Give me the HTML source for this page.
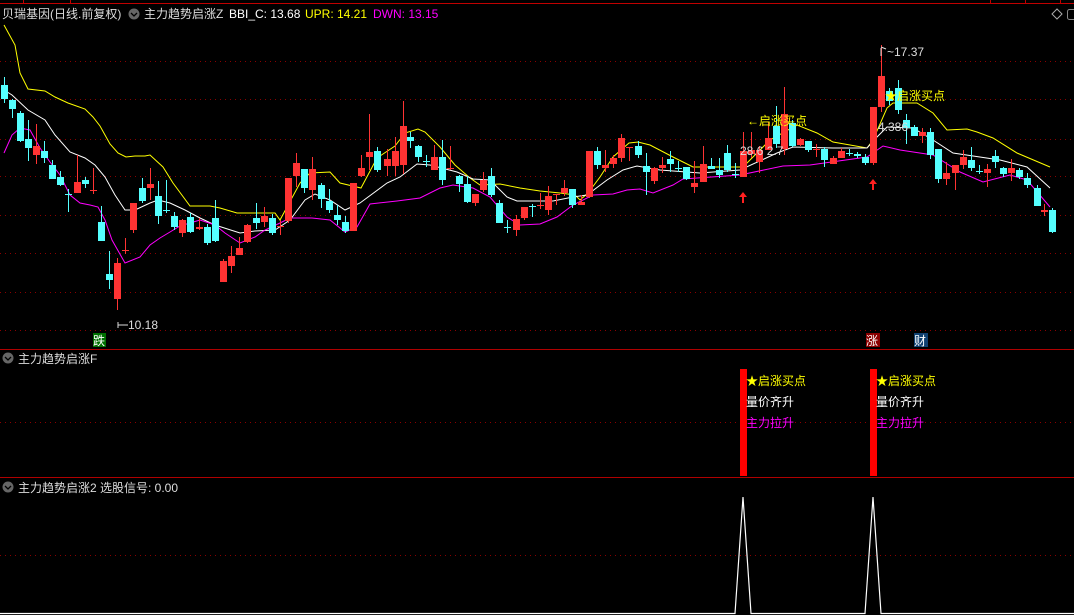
<!DOCTYPE html>
<html><head><meta charset="utf-8"><style>
html,body{margin:0;padding:0;background:#000;width:1074px;height:615px;overflow:hidden}
svg{display:block}
text{font-family:"Liberation Sans","Noto Sans CJK SC",sans-serif;font-size:12px}
</style></head><body>
<svg id="s" width="1074" height="615" viewBox="0 0 1074 615" xmlns="http://www.w3.org/2000/svg">
<rect width="1074" height="615" fill="#000"/>
<line x1="0" y1="3.5" x2="1074" y2="3.5" stroke="#c00000"/>
<line x1="23.5" y1="0" x2="23.5" y2="3" stroke="#c00000"/>
<line x1="70.5" y1="0" x2="70.5" y2="3" stroke="#c00000"/>
<line x1="990.5" y1="0" x2="990.5" y2="3" stroke="#c00000"/>
<line x1="1025.5" y1="0" x2="1025.5" y2="3" stroke="#c00000"/>
<line x1="1060.5" y1="0" x2="1060.5" y2="3" stroke="#c00000"/>
<g id="grid" stroke="#8a0000" stroke-dasharray="1,4"></g>
<line x1="0" y1="349.5" x2="1074" y2="349.5" stroke="#b00000"/>
<line x1="0" y1="477.5" x2="1074" y2="477.5" stroke="#b00000"/>
<text x="2" y="18" fill="#ddd">贝瑞基因(日线.前复权)</text>
<circle cx="134" cy="14" r="5.5" fill="#666"/><path d="M131,13 L134,16 L137,13" stroke="#000" fill="none" stroke-width="1.3"/>
<text x="144" y="18" fill="#ddd">主力趋势启涨Z</text>
<text x="229" y="18" fill="#fff">BBI_C: 13.68</text>
<text x="305" y="18" fill="#ffff00">UPR: 14.21</text>
<text x="373" y="18" fill="#ff00ff">DWN: 13.15</text>
<path d="M1052,14 L1057,9 L1062,14 L1057,19 Z" stroke="#aaa" fill="none"/>
<rect x="1067.5" y="9.5" width="8" height="10" stroke="#888" fill="none" rx="2"/>
<g id="lines" fill="none" stroke-width="1"></g>
<g id="candles"></g>
<text x="747" y="125" fill="#ffff00">←启涨买点</text>
<text x="740" y="155" fill="#ddd" font-size="11">28.6 2.7</text>
<text x="878" y="131" fill="#ddd" font-size="11">4.386</text>
<text x="885" y="100" fill="#ffff00">★启涨买点</text>
<path d="M881,48 L881,56 M881,47 L886,49" stroke="#ddd" fill="none"/>
<text x="887" y="56" fill="#ddd">~17.37</text>
<path d="M118,322 L118,328 M118,325 L128,325" stroke="#ddd" fill="none"/>
<text x="128" y="329" fill="#ddd">10.18</text>
<path d="M743,192 L739,197 L742,197 L742,203 L744,203 L744,197 L747,197 Z" fill="#ff2020"/>
<path d="M873,179 L869,184 L872,184 L872,190 L874,190 L874,184 L877,184 Z" fill="#ff2020"/>
<rect x="93" y="333" width="13" height="14" fill="#007000"/><text x="93" y="345" fill="#fff">跌</text>
<rect x="866" y="333" width="14" height="14" fill="#8b0000"/><text x="866" y="345" fill="#fff">涨</text>
<rect x="914" y="333" width="14" height="14" fill="#104070"/><text x="914" y="345" fill="#fff">财</text>
<circle cx="8" cy="358" r="5.5" fill="#666"/><path d="M5,357 L8,360 L11,357" stroke="#000" fill="none" stroke-width="1.3"/>
<text x="18" y="363" fill="#ddd">主力趋势启涨F</text>
<rect x="740" y="369" width="7" height="107" fill="#ff0000"/>
<rect x="870" y="369" width="7" height="107" fill="#ff0000"/>
<text x="746" y="385" fill="#ffff00">★启涨买点</text>
<text x="746" y="406" fill="#fff">量价齐升</text>
<text x="746" y="427" fill="#ff00ff">主力拉升</text>
<text x="876" y="385" fill="#ffff00">★启涨买点</text>
<text x="876" y="406" fill="#fff">量价齐升</text>
<text x="876" y="427" fill="#ff00ff">主力拉升</text>
<circle cx="8" cy="487" r="5.5" fill="#666"/><path d="M5,486 L8,489 L11,486" stroke="#000" fill="none" stroke-width="1.3"/>
<text x="18" y="492" fill="#ddd">主力趋势启涨2 选股信号: 0.00</text>
<path d="M0,613.5 L735,613.5 L743,497 L751,613.5 L865,613.5 L873,497 L881,613.5 L1074,613.5" stroke="#fff" fill="none" stroke-width="1.2"/>
</svg>
<script>
var NS="http://www.w3.org/2000/svg",s=document.getElementById('s');
function el(p,t,a){var e=document.createElementNS(NS,t);for(var k in a)e.setAttribute(k,a[k]);p.appendChild(e);return e;}
var g=document.getElementById('grid');
[61,99,139,176,215,253,292,330,422,555].forEach(function(y){el(g,'line',{x1:0,y1:y+.5,x2:1074,y2:y+.5});});
var L=document.getElementById('lines');
function pl(pts,c){el(L,'polyline',{points:pts.map(function(p){return p.join(',')}).join(' '),stroke:c});}
pl([[4,25],[15,45],[20,73],[28,89],[45,91],[55,97],[68,103],[85,109],[93,117],[100,126],[110,144],[118,153],[126,157],[135,156],[145,156],[150,155],[163,167],[173,183],[190,206],[210,206],[220,208],[237,213],[275,213],[280,220],[300,183],[310,173],[330,172],[340,183],[361,188],[377,158],[395,146],[405,133],[418,129],[425,132],[440,147],[455,165],[470,178],[480,185],[500,184],[520,188],[540,191],[560,193],[575,195],[580,200],[588,193],[600,177],[613,157],[629,143],[638,142],[650,145],[673,157],[693,167],[743,167],[770,140],[797,125],[817,133],[833,142],[867,148],[873,140],[887,108],[893,103],[917,103],[933,113],[947,130],[967,129],[977,132],[993,138],[1017,153],[1050,167]],'#ffff00');
pl([[4,90],[12,95],[28,110],[45,120],[55,135],[70,152],[85,158],[95,165],[105,177],[115,195],[125,210],[135,210],[150,203],[158,200],[170,203],[185,210],[200,218],[215,225],[240,233],[255,231],[275,230],[290,220],[305,200],[315,194],[330,200],[345,210],[360,203],[387,183],[400,177],[417,164],[430,165],[457,172],[473,179],[490,180],[507,197],[517,201],[553,201],[573,197],[587,195],[607,180],[623,170],[637,166],[660,170],[700,173],[740,170],[777,153],[793,147],[833,148],[867,148],[877,137],[887,127],[913,128],[933,140],[953,153],[1000,160],[1027,167],[1050,188]],'#ffffff');
pl([[4,153],[12,135],[20,128],[30,130],[40,148],[50,162],[60,175],[70,195],[80,203],[90,205],[98,207],[105,220],[112,240],[125,263],[140,257],[150,245],[160,238],[170,232],[180,226],[200,220],[215,225],[225,233],[240,243],[255,237],[265,230],[280,223],[290,218],[312,218],[330,220],[345,232],[357,227],[370,204],[397,201],[420,198],[440,188],[453,185],[473,188],[490,197],[507,217],[520,225],[540,224],[557,217],[573,205],[593,195],[613,194],[627,190],[640,189],[653,193],[673,185],[683,179],[740,175],[783,166],[810,165],[867,157],[883,146],[900,150],[933,155],[960,172],[983,182],[1010,175],[1027,180],[1050,207]],'#ff00ff');
// [x, color(r/c), bodyTop, bodyBottom, wickTop, wickBottom]
var C=[[4,'c',85,99,77,103],[12,'c',100,109,99,118],[20,'c',113,141,111,142],[28,'c',139,148,120,161],[36,'r',146,155,124,164],[44,'c',151,158,141,163],[52,'c',165,179,160,179],[60,'c',177,185,171,186],[68,'c',194,195,189,212],[77,'r',182,193,155,193],[85,'c',180,184,177,188],[93,'r',190,191,168,194],[101,'c',222,241,206,241],[109,'c',274,280,251,289],[117,'r',263,299,258,310],[125,'r',250,251,238,254],[133,'r',203,230,203,233],[142,'c',188,201,178,203],[150,'r',184,188,168,200],[158,'c',196,216,181,224],[166,'c',210,211,180,213],[174,'c',216,227,212,230],[182,'r',220,233,219,237],[190,'c',217,232,213,233],[199,'r',227,229,218,230],[207,'c',227,243,224,245],[215,'c',218,241,200,242],[223,'r',261,282,259,282],[231,'r',256,266,246,273],[239,'r',248,255,237,255],[247,'r',225,242,224,243],[256,'c',218,223,203,229],[264,'r',216,222,207,227],[272,'c',218,233,214,235],[280,'r',226,227,220,235],[288,'r',178,221,178,223],[296,'r',163,176,153,187],[304,'c',169,188,169,193],[312,'r',169,190,157,200],[321,'c',185,199,183,208],[329,'c',201,210,189,213],[337,'c',215,220,205,225],[345,'c',222,231,216,233],[353,'r',183,231,183,231],[361,'r',168,176,155,177],[369,'r',152,157,114,170],[377,'c',151,170,147,172],[387,'r',159,166,149,176],[395,'r',151,166,137,176],[403,'r',126,165,101,174],[410,'c',137,141,132,148],[418,'c',146,157,145,162],[426,'c',161,162,155,167],[434,'r',157,170,145,170],[442,'c',157,180,140,185],[450,'r',168,169,146,170],[459,'c',176,184,175,192],[467,'c',184,202,176,203],[475,'r',194,203,194,206],[483,'r',180,190,172,192],[491,'c',176,195,168,197],[499,'c',203,223,200,223],[507,'c',227,228,220,233],[516,'r',219,230,215,236],[524,'r',207,218,207,220],[532,'c',206,207,204,217],[540,'r',205,206,193,209],[548,'r',196,210,186,215],[556,'r',194,195,194,205],[564,'r',188,193,180,196],[572,'c',189,205,189,208],[581,'r',202,205,195,205],[589,'r',151,197,151,198],[597,'c',151,165,147,169],[605,'r',165,168,150,172],[613,'r',158,164,155,168],[621,'r',138,158,134,162],[629,'r',147,148,147,161],[638,'c',146,155,141,158],[646,'c',166,172,153,195],[654,'r',168,181,167,184],[662,'r',165,168,157,173],[670,'c',159,164,151,172],[678,'c',168,169,161,172],[686,'c',167,179,167,180],[694,'r',183,187,161,193],[703,'r',164,182,146,182],[711,'c',166,169,158,169],[719,'c',170,175,158,178],[727,'c',153,170,145,172],[735,'c',174,175,163,178],[743,'r',151,177,132,177],[751,'r',150,154,132,158],[759,'r',150,162,146,173],[768,'r',138,150,122,150],[776,'c',126,144,106,148],[784,'r',114,149,87,155],[792,'c',123,146,120,147],[800,'r',139,145,138,146],[808,'c',141,150,141,152],[816,'r',149,150,144,157],[824,'c',149,160,147,167],[833,'r',158,164,156,164],[841,'r',151,158,148,158],[849,'c',153,154,149,156],[857,'c',154,156,152,158],[865,'c',157,163,154,165],[873,'r',107,163,107,165],[881,'r',76,107,45,112],[889,'c',91,101,88,105],[898,'c',88,110,80,114],[906,'c',120,128,114,144],[914,'c',127,136,125,136],[922,'r',132,136,128,143],[930,'c',132,155,128,159],[938,'c',149,179,149,183],[946,'r',173,179,162,185],[955,'r',165,173,165,190],[963,'r',157,165,150,169],[971,'c',160,168,147,171],[979,'c',171,172,165,174],[987,'r',169,173,164,187],[995,'c',156,162,150,168],[1003,'c',168,174,167,177],[1011,'r',168,173,159,181],[1019,'c',170,177,168,179],[1027,'c',178,185,173,188],[1037,'c',188,206,185,206],[1044,'r',210,212,204,216],[1052,'c',210,232,208,233]];
var G=document.getElementById('candles');
C.forEach(function(c){var x=c[0],col=c[1]=='r'?'#ff3333':'#55ffff';
 el(G,'rect',{x:x,y:c[4],width:1,height:c[5]-c[4],fill:col});
 var h=Math.max(1,c[3]-c[2]);
 el(G,'rect',{x:x-3,y:c[2],width:7,height:h,fill:col});});
</script>
</body></html>
